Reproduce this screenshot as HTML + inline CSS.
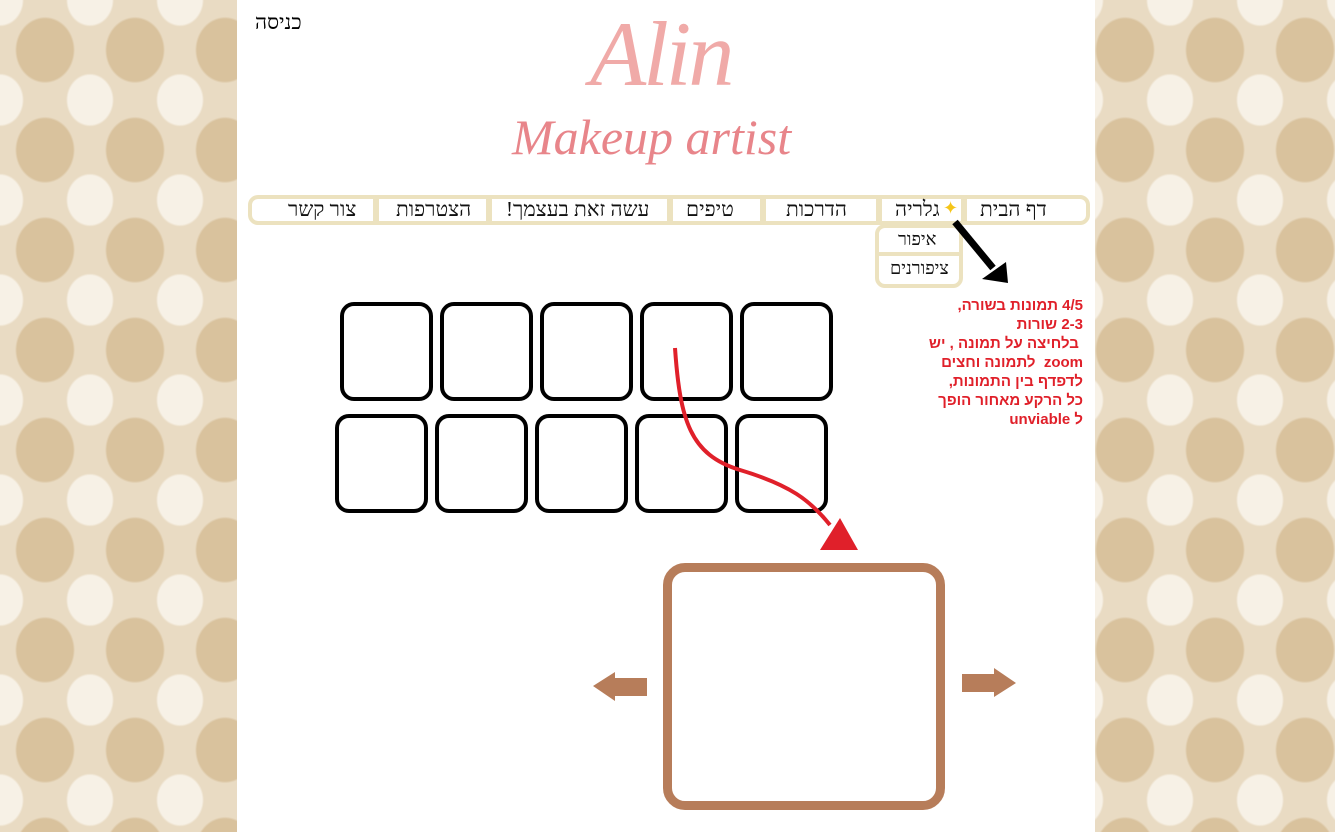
<!DOCTYPE html>
<html><head><meta charset="utf-8"><style>
html,body{margin:0;padding:0}
body{width:1335px;height:832px;position:relative;overflow:hidden;
background-color:#e9dbc3;
background-image:
radial-gradient(ellipse at 50% 50%, #d9c29d 0 28px, rgba(255,255,255,0) 30px),
radial-gradient(ellipse at 50% 50%, #f7f1e6 0 22px, rgba(255,255,255,0) 24px);
background-size:90px 100px,90px 100px;background-position:0 0,45px 50px;
font-family:"Liberation Serif","Noto Serif CJK SC",serif}
.panel{position:absolute;left:237px;top:0;width:858px;height:832px;background:#fff}
.abs{position:absolute}
.nav{position:absolute;left:248px;top:195px;width:834px;height:22px;border:4px solid #ece2bf;border-radius:10px;background:#fff}
.sep{position:absolute;top:195px;width:6px;height:30px;background:#ece2bf}
.nt{position:absolute;top:197px;font-size:21px;color:#111;white-space:nowrap;direction:rtl}
.box{position:absolute;width:85px;height:91px;border:4px solid #000;border-radius:14px;box-sizing:content-box}
.red{position:absolute;left:903px;top:296px;width:180px;text-align:right;direction:rtl;color:#e0202a;font:bold 15px/19px "Liberation Sans",sans-serif;white-space:nowrap}
</style></head><body>
<div class="panel"></div>
<div class="abs" style="left:255px;top:10px;font-size:21px">כניסה</div>
<div class="abs" style="left:590px;top:8px;font:italic 92px/1 'Liberation Serif',serif;color:#f0aaa8;letter-spacing:-3px">Alin</div>
<div class="abs" style="left:512px;top:112px;font:italic 50px/1 'Liberation Serif',serif;color:#e8858a">Makeup artist</div>
<div class="nav"></div>
<div class="sep" style="left:373px"></div>
<div class="sep" style="left:486px"></div>
<div class="sep" style="left:667px"></div>
<div class="sep" style="left:760px"></div>
<div class="sep" style="left:876px"></div>
<div class="sep" style="left:961px"></div>
<div class="nt" style="left:288px">צור קשר</div>
<div class="nt" style="left:396px">הצטרפות</div>
<div class="nt" style="left:506px">עשה זאת בעצמך!</div>
<div class="nt" style="left:686px">טיפים</div>
<div class="nt" style="left:786px">הדרכות</div>
<div class="nt" style="left:895px">גלריה</div>
<div class="abs" style="left:943px;top:198px;color:#f5c518;font-size:18px">✦</div>
<div class="nt" style="left:980px">דף הבית</div>
<div class="abs" style="left:875px;top:224px;width:80px;height:56px;border:4px solid #ece2bf;border-radius:10px;background:#fff"></div>
<div class="abs" style="left:875px;top:252px;width:88px;height:4px;background:#ece2bf"></div>
<div class="nt" style="left:898px;top:229px;font-size:18px">איפור</div>
<div class="nt" style="left:890px;top:258px;font-size:18px">ציפורנים</div>
<div class="red">4/5 תמונות בשורה,<br>2-3 שורות<br>&nbsp;בלחיצה על תמונה , יש<br>zoom&nbsp; לתמונה וחצים<br>לדפדף בין התמונות,<br>כל הרקע מאחור הופך<br>ל unviable&nbsp;&nbsp;&nbsp;</div>
<div class="box" style="left:340px;top:302px"></div>
<div class="box" style="left:440px;top:302px"></div>
<div class="box" style="left:540px;top:302px"></div>
<div class="box" style="left:640px;top:302px"></div>
<div class="box" style="left:740px;top:302px"></div>
<div class="box" style="left:335px;top:414px"></div>
<div class="box" style="left:435px;top:414px"></div>
<div class="box" style="left:535px;top:414px"></div>
<div class="box" style="left:635px;top:414px"></div>
<div class="box" style="left:735px;top:414px"></div>
<div class="abs" style="left:663px;top:563px;width:264px;height:229px;border:9px solid #b77d5a;border-radius:22px"></div>
<svg class="abs" style="left:0;top:0" width="1335" height="832">
<path d="M675 348 C680 420 690 455 740 470 C790 485 810 500 830 525" stroke="#e0202a" stroke-width="4" fill="none"/>
<polygon points="820,550 858,550 840,518" fill="#e0202a"/>
<line x1="955" y1="222" x2="993" y2="268" stroke="#000" stroke-width="7"/>
<polygon points="1008,283 982,279 1006,262" fill="#000"/>
<polygon points="593,686 615,672 615,678 647,678 647,696 615,696 615,701" fill="#b77d5a"/>
<polygon points="1016,683 994,668 994,674 962,674 962,692 994,692 994,697" fill="#b77d5a"/>
</svg>
</body></html>
